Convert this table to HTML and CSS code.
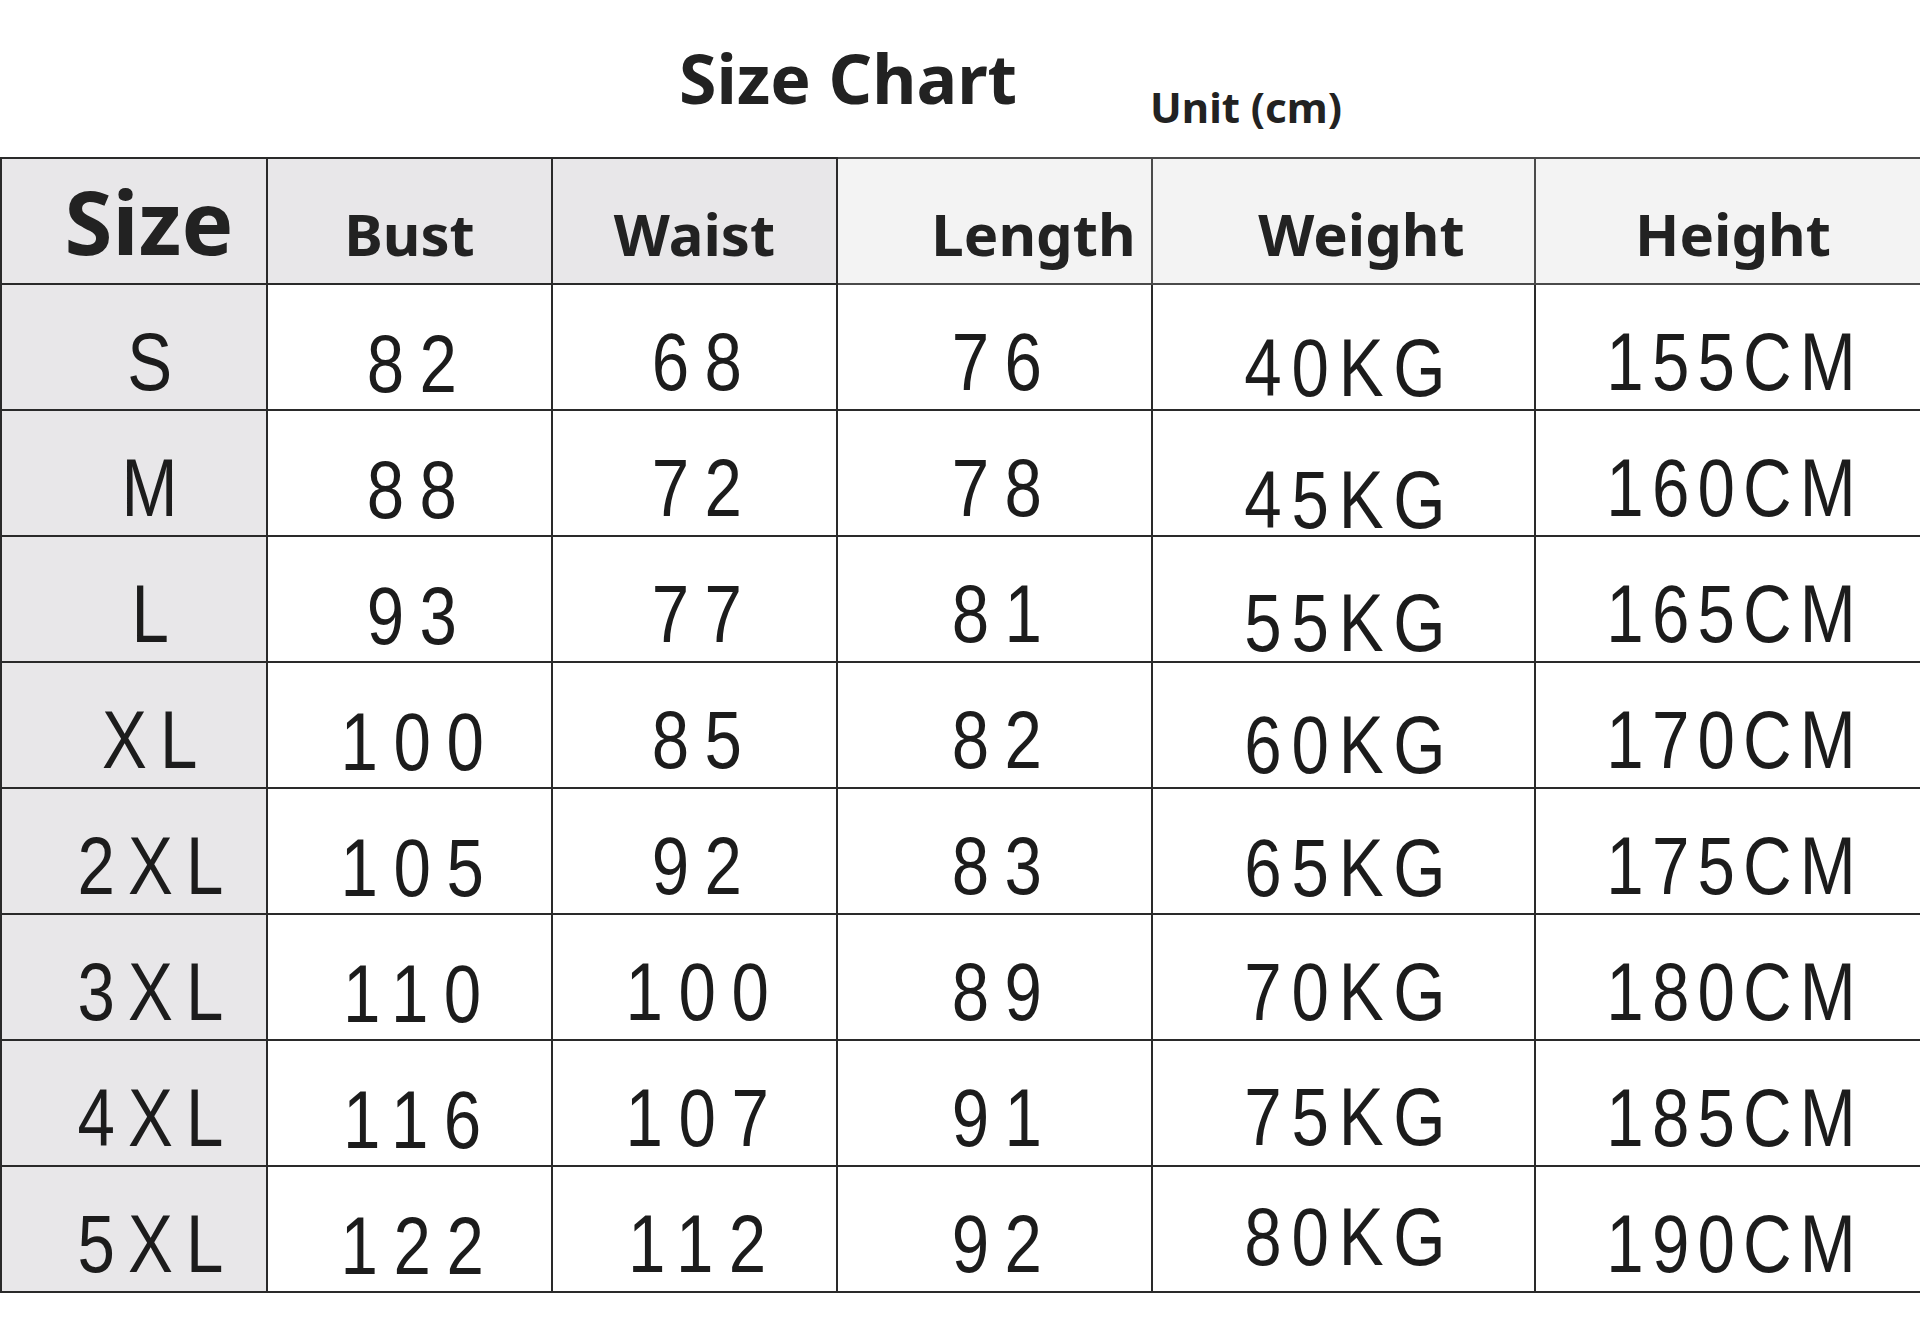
FILE: index.html
```html
<!DOCTYPE html>
<html lang="en">
<head>
<meta charset="utf-8">
<title>Size Chart</title>
<link rel="stylesheet" href="styles.css">
</head>
<body>
<header class="top">
  <h1 class="title">Size Chart</h1>
  <span class="unit">Unit (cm)</span>
</header>
<table class="chart">
  <colgroup>
    <col class="c-size"><col class="c-bust"><col class="c-waist"><col class="c-length"><col class="c-weight"><col class="c-height">
  </colgroup>
  <thead>
    <tr>
      <th class="h-size">Size</th>
      <th class="h-gray">Bust</th>
      <th class="h-gray">Waist</th>
      <th class="h-light h-length">Length</th>
      <th class="h-light h-weight">Weight</th>
      <th class="h-light h-height">Height</th>
    </tr>
  </thead>
  <tbody>
    <tr><td class="size"><span class="v">S</span></td><td class="bust"><span class="v">82</span></td><td><span class="v">68</span></td><td><span class="v">76</span></td><td class="weight"><span class="v">40KG</span></td><td class="height"><span class="v">155CM</span></td></tr>
    <tr><td class="size"><span class="v">M</span></td><td class="bust"><span class="v">88</span></td><td><span class="v">72</span></td><td><span class="v">78</span></td><td class="weight"><span class="v">45KG</span></td><td class="height"><span class="v">160CM</span></td></tr>
    <tr><td class="size"><span class="v">L</span></td><td class="bust"><span class="v">93</span></td><td><span class="v">77</span></td><td><span class="v">81</span></td><td class="weight"><span class="v">55KG</span></td><td class="height"><span class="v">165CM</span></td></tr>
    <tr><td class="size"><span class="v">XL</span></td><td class="bust"><span class="v">100</span></td><td><span class="v">85</span></td><td><span class="v">82</span></td><td class="weight"><span class="v">60KG</span></td><td class="height"><span class="v">170CM</span></td></tr>
    <tr><td class="size"><span class="v">2XL</span></td><td class="bust"><span class="v">105</span></td><td><span class="v">92</span></td><td><span class="v">83</span></td><td class="weight"><span class="v">65KG</span></td><td class="height"><span class="v">175CM</span></td></tr>
    <tr><td class="size"><span class="v">3XL</span></td><td class="bust"><span class="v">110</span></td><td><span class="v">100</span></td><td><span class="v">89</span></td><td class="weight"><span class="v">70KG</span></td><td class="height"><span class="v">180CM</span></td></tr>
    <tr><td class="size"><span class="v">4XL</span></td><td class="bust"><span class="v">116</span></td><td><span class="v">107</span></td><td><span class="v">91</span></td><td class="weight"><span class="v">75KG</span></td><td class="height"><span class="v">185CM</span></td></tr>
    <tr><td class="size"><span class="v">5XL</span></td><td class="bust"><span class="v">122</span></td><td><span class="v">112</span></td><td><span class="v">92</span></td><td class="weight"><span class="v">80KG</span></td><td class="height"><span class="v">190CM</span></td></tr>
  </tbody>
</table>
</body>
</html>
```

FILE: styles.css
```css
html, body {
  margin: 0;
  padding: 0;
  background: #ffffff;
}

.top {
  display: flex;
  align-items: flex-start;
  height: 157px;
  box-sizing: border-box;
  padding-left: 679px;
  font-family: "Noto Sans", "Open Sans", sans-serif;
  font-weight: 700;
  color: #222222;
}

.title {
  margin: 44px 0 0;
  font-size: 68px;
  line-height: 68px;
  font-weight: 700;
}

.unit {
  margin: 86px 0 0 133px;
  font-size: 42px;
  line-height: 42px;
}

.chart {
  border-collapse: collapse;
  table-layout: fixed;
  width: 1920px;
  color: #1c1c1c;
}

.c-size { width: 266px; }
.c-bust { width: 285px; }
.c-waist { width: 285px; }
.c-length { width: 315px; }
.c-weight { width: 383px; }
.c-height { width: 386px; }

.chart tr {
  height: 126px;
}

.chart th,
.chart td {
  border: 2px solid #2a2a2a;
  padding: 0;
  text-align: center;
  vertical-align: middle;
  white-space: nowrap;
}

.chart th {
  font-family: "Noto Sans", "Open Sans", sans-serif;
  font-weight: 700;
  font-size: 58px;
  color: #222222;
  padding-top: 24px;
}

.chart th.h-size {
  background: #e8e7e9;
  font-size: 87px;
  padding-top: 0;
  padding-left: 30px;
}

.chart th.h-gray {
  background: #e8e7e9;
}

.chart th.h-light {
  background: #f3f3f3;
  border-color: #4a4a4a;
}

.chart th.h-length { padding-left: 78px; }
.chart th.h-weight { padding-left: 36px; }
.chart th.h-height { padding-left: 10px; }

.chart td {
  font-family: "Liberation Sans", Arial, sans-serif;
  font-size: 82px;
  line-height: 60px;
  letter-spacing: 19px;
  padding-top: 30px;
  padding-left: 20px;
  background: #ffffff;
}

.v {
  display: inline-block;
  line-height: 60px;
  transform: scaleX(0.82);
  transform-origin: 50% 50%;
}

.chart td.size {
  background: #e8e7e9;
  letter-spacing: 16px;
  padding-left: 45px;
}

.chart td.bust {
  padding-top: 34px;
}

.chart td.weight {
  letter-spacing: 12px;
  padding-left: 12px;
}

.chart td.height {
  letter-spacing: 10px;
  padding-left: 14px;
}

.chart tbody tr:nth-child(1) td.weight { padding-top: 42px; }
.chart tbody tr:nth-child(2) td.weight { padding-top: 54px; }
.chart tbody tr:nth-child(3) td.weight { padding-top: 48px; }
.chart tbody tr:nth-child(4) td.weight { padding-top: 40px; }
.chart tbody tr:nth-child(5) td.weight { padding-top: 34px; }
.chart tbody tr:nth-child(6) td.weight { padding-top: 30px; }
.chart tbody tr:nth-child(7) td.weight { padding-top: 28px; }
.chart tbody tr:nth-child(8) td.weight { padding-top: 16px; }
```
